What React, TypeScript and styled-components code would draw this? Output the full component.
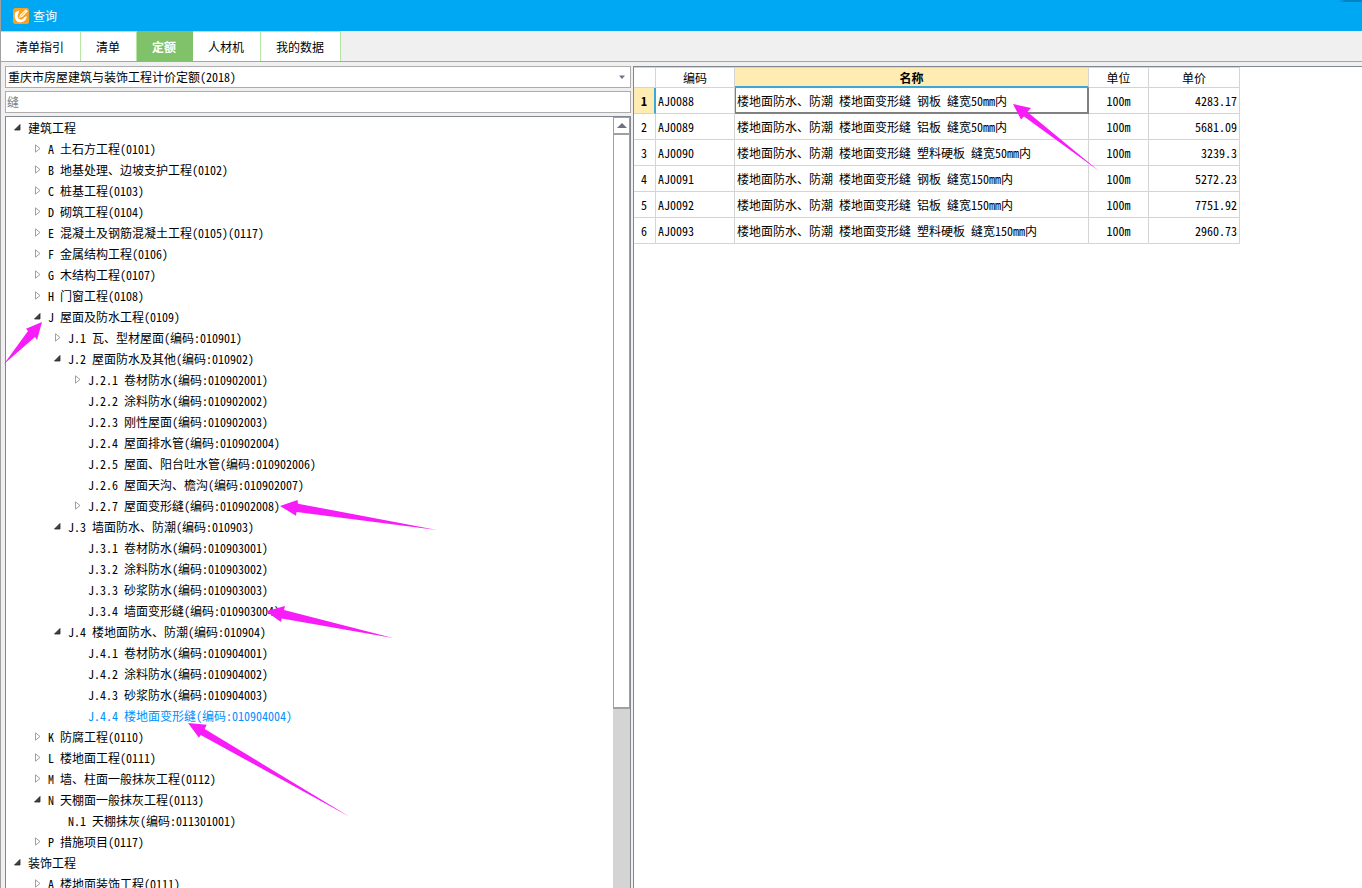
import React, { useState } from 'react';
import styled, { createGlobalStyle, css } from 'styled-components';

const GlobalStyle = createGlobalStyle`
  * { box-sizing: border-box; }
  body { margin: 0; }
  body, button, input, select, table {
    font-family: "Noto Sans CJK SC", sans-serif;
    font-feature-settings: "hwid";
    font-size: 12px;
    line-height: 16px;
    color: #000;
  }
`;

const Window = styled.div`
  position: relative;
  display: flex;
  flex-direction: column;
  height: 100vh;
  overflow: hidden;
  background: #f0f0f0;
  border-left: 1px solid #a0a0a0;
`;

const TitleBar = styled.header`
  display: flex;
  align-items: center;
  gap: 4px;
  flex: none;
  height: 31px;
  padding-left: 12px;
  background: #00a8f3;
  color: #fff;
`;

const Title = styled.h1`
  margin: 0;
  font-size: 12px;
  font-weight: 400;
`;

const CornerShade = styled.span`
  align-self: flex-start;
  width: 24px;
  height: 2px;
  margin-left: auto;
  background: linear-gradient(to right, #00a8f3, #0284c0 30%);
`;

const Tabs = styled.nav`
  display: flex;
  flex: none;
  height: 31px;
  border-bottom: 1px solid #7fc46c;
`;

const Tab = styled.button<{ $active?: boolean }>`
  height: 30px;
  padding: 1px 16px 0 15px;
  border: 0;
  border-top: 1px solid #b5e6a2;
  border-right: 1px solid #b5e6a2;
  background: #fff;
  ${(p) =>
    p.$active &&
    css`
      border-color: #80c269;
      background: #80c269;
      color: #fff;
      font-weight: 700;
    `}
`;

const Panes = styled.main`
  display: grid;
  grid-template-columns: 632fr 729fr;
  flex: 1;
  min-height: 0;
  padding-top: 4px;
`;

const Side = styled.section`
  display: flex;
  flex-direction: column;
  gap: 3px;
  min-width: 0;
  min-height: 0;
  padding: 0 2px 0 4px;
`;

const Combo = styled.div`
  display: grid;
  flex: none;
  align-items: center;
  height: 22px;
  border: 1px solid #acacac;
  background: #fff;

  & > * { grid-area: 1 / 1; }
  svg { justify-self: end; margin-right: 5px; pointer-events: none; }
`;

const Select = styled.select`
  width: 100%;
  height: 20px;
  padding: 0 2px;
  border: 0;
  appearance: none;
  background: transparent;
`;

const Search = styled.input`
  flex: none;
  width: 100%;
  height: 22px;
  padding: 0 1px 2px;
  border: 1px solid #acacac;
  border-radius: 0;
  background: #fff;
  &::placeholder { color: #808080; opacity: 1; }
`;

const TreeBox = styled.div`
  display: flex;
  flex: 1;
  min-height: 0;
  border: 1px solid #828790;
  border-bottom: 0;
  background: #fff;
`;

const Tree = styled.ul`
  flex: 1;
  min-width: 0;
  margin: 0;
  padding: 0;
  overflow: hidden;
  list-style: none;
`;

const Node = styled.li<{ $level: number; $selected: boolean }>`
  display: flex;
  align-items: center;
  height: 21px;
  padding-left: ${(p) => 6 + p.$level * 20}px;
  white-space: pre;
  color: ${(p) => (p.$selected ? '#0090ff' : '#000')};
`;

const Toggle = styled.button`
  display: flex;
  align-items: center;
  justify-content: center;
  width: 11px;
  height: 11px;
  margin-right: 5px;
  padding: 0;
  border: 0;
  background: none;
`;

const Spacer = styled.span`
  width: 16px;
`;

const ScrollBar = styled.div`
  display: flex;
  flex-direction: column;
  flex: none;
  width: 17px;
  background: #d4d4d4;
`;

const ScrollButton = styled.button`
  flex: none;
  height: 18px;
  padding: 0;
  border: 1px solid #a0a0a0;
  border-bottom-width: 2px;
  background: #fff;
  line-height: 0;
`;

const Thumb = styled.div`
  flex: 574;
  border: 1px solid #a0a0a0;
  border-top: 0;
  border-bottom-width: 2px;
  background: #fff;
`;

const Track = styled.div`
  flex: 179;
`;

const Results = styled.section`
  min-width: 0;
  overflow: hidden;
  border-top: 1px solid #828790;
  border-left: 1px solid #828790;
  background: #fff;
`;

const Grid = styled.table`
  width: 606px;
  border-collapse: separate;
  border-spacing: 0;
  table-layout: fixed;
  border-top: 1px solid #d4d4d4;
`;

const Head = styled.th<{ $active?: boolean }>`
  height: 20px;
  padding: 0;
  border-right: 1px solid #d4d4d4;
  border-bottom: 1px solid #d4d4d4;
  font-weight: 400;
  ${(p) =>
    p.$active &&
    css`
      padding-top: 1px;
      border-bottom: 2px solid #3ba7d6;
      background: #ffecb3;
      font-weight: 700;
    `}
`;

const RowHead = styled.th<{ $active: boolean }>`
  padding: 0 1px 0 0;
  border-right: 1px solid #d4d4d4;
  border-bottom: 1px solid #d4d4d4;
  font-weight: 400;
  ${(p) =>
    p.$active &&
    css`
      padding: 0;
      border-right: 2px solid #3ba7d6;
      background: #ffecb3;
      font-weight: 700;
    `}
`;

const Cell = styled.td<{ $align?: 'left' | 'center' | 'right'; $focus?: boolean }>`
  height: 26px;
  padding: 0 2px;
  border-right: 1px solid #d4d4d4;
  border-bottom: 1px solid #d4d4d4;
  text-align: ${(p) => p.$align ?? 'left'};
  white-space: pre;
  overflow: hidden;
  ${(p) =>
    p.$focus &&
    css`
      padding: 1px 1px 0;
      border: 1px solid #808080;
      border-right-width: 2px;
      border-bottom-width: 2px;
      border-top: 0;
    `}
`;

const Marks = styled.svg`
  position: absolute;
  top: 0;
  left: -1px;
  width: 1362px;
  height: 888px;
  pointer-events: none;
`;

type Item = { level: number; text: string; state?: 'open' | 'closed' };

const items: Item[] = [
  { level: 0, text: '建筑工程', state: 'open' },
  { level: 1, text: 'A 土石方工程(0101)', state: 'closed' },
  { level: 1, text: 'B 地基处理、边坡支护工程(0102)', state: 'closed' },
  { level: 1, text: 'C 桩基工程(0103)', state: 'closed' },
  { level: 1, text: 'D 砌筑工程(0104)', state: 'closed' },
  { level: 1, text: 'E 混凝土及钢筋混凝土工程(0105)(0117)', state: 'closed' },
  { level: 1, text: 'F 金属结构工程(0106)', state: 'closed' },
  { level: 1, text: 'G 木结构工程(0107)', state: 'closed' },
  { level: 1, text: 'H 门窗工程(0108)', state: 'closed' },
  { level: 1, text: 'J 屋面及防水工程(0109)', state: 'open' },
  { level: 2, text: 'J.1 瓦、型材屋面(编码:010901)', state: 'closed' },
  { level: 2, text: 'J.2 屋面防水及其他(编码:010902)', state: 'open' },
  { level: 3, text: 'J.2.1 卷材防水(编码:010902001)', state: 'closed' },
  { level: 3, text: 'J.2.2 涂料防水(编码:010902002)' },
  { level: 3, text: 'J.2.3 刚性屋面(编码:010902003)' },
  { level: 3, text: 'J.2.4 屋面排水管(编码:010902004)' },
  { level: 3, text: 'J.2.5 屋面、阳台吐水管(编码:010902006)' },
  { level: 3, text: 'J.2.6 屋面天沟、檐沟(编码:010902007)' },
  { level: 3, text: 'J.2.7 屋面变形缝(编码:010902008)', state: 'closed' },
  { level: 2, text: 'J.3 墙面防水、防潮(编码:010903)', state: 'open' },
  { level: 3, text: 'J.3.1 卷材防水(编码:010903001)' },
  { level: 3, text: 'J.3.2 涂料防水(编码:010903002)' },
  { level: 3, text: 'J.3.3 砂浆防水(编码:010903003)' },
  { level: 3, text: 'J.3.4 墙面变形缝(编码:010903004)' },
  { level: 2, text: 'J.4 楼地面防水、防潮(编码:010904)', state: 'open' },
  { level: 3, text: 'J.4.1 卷材防水(编码:010904001)' },
  { level: 3, text: 'J.4.2 涂料防水(编码:010904002)' },
  { level: 3, text: 'J.4.3 砂浆防水(编码:010904003)' },
  { level: 3, text: 'J.4.4 楼地面变形缝(编码:010904004)' },
  { level: 1, text: 'K 防腐工程(0110)', state: 'closed' },
  { level: 1, text: 'L 楼地面工程(0111)', state: 'closed' },
  { level: 1, text: 'M 墙、柱面一般抹灰工程(0112)', state: 'closed' },
  { level: 1, text: 'N 天棚面一般抹灰工程(0113)', state: 'open' },
  { level: 2, text: 'N.1 天棚抹灰(编码:011301001)' },
  { level: 1, text: 'P 措施项目(0117)', state: 'closed' },
  { level: 0, text: '装饰工程', state: 'open' },
  { level: 1, text: 'A 楼地面装饰工程(0111)', state: 'closed' },
];

const rows = [
  ['AJ0088', '楼地面防水、防潮 楼地面变形缝 钢板 缝宽50mm内', '100m', '4283.17'],
  ['AJ0089', '楼地面防水、防潮 楼地面变形缝 铝板 缝宽50mm内', '100m', '5681.09'],
  ['AJ0090', '楼地面防水、防潮 楼地面变形缝 塑料硬板 缝宽50mm内', '100m', '3239.3'],
  ['AJ0091', '楼地面防水、防潮 楼地面变形缝 钢板 缝宽150mm内', '100m', '5272.23'],
  ['AJ0092', '楼地面防水、防潮 楼地面变形缝 铝板 缝宽150mm内', '100m', '7751.92'],
  ['AJ0093', '楼地面防水、防潮 楼地面变形缝 塑料硬板 缝宽150mm内', '100m', '2960.73'],
];

const tabs = ['清单指引', '清单', '定额', '人材机', '我的数据'];

const arrows = [
  '1013,104 1031,108 1027.5,112 1099,171 1024,116.5 1021,119.5',
  '42,322 26,328.7 28,331 4,364 35,337 37,340',
  '280,506 297.5,500 298,503.7 437,530 296.5,512 296,515.7',
  '266,611.3 285,606 284,610 393,638 281.7,618.5 281,622',
  '188,723 206.7,724.7 204.7,729 350,817 200.7,735 199,737.7',
];

const AppIcon = () => (
  <svg width="16" height="16" viewBox="0 0 16 16" aria-hidden="true">
    <rect width="16" height="16" rx="2.5" fill="#f9a21f" />
    <path d="M6.500 2.200 2.300 4.200C1.300 7 1.500 10 3 12.200c1.300 1.900 3.500 2.500 5.500 2.100 3-.6 5-2.700 5.300-6.300L11 9.500c-.8 1.500-2 2.300-3.500 2.100-2-.3-2.900-1.800-2.800-4z" fill="#fff" />
    <path d="M12.800 1.200l2 2-5.300 5.600-3.300 1.300.8-3.200z" fill="#fff" />
    <path d="M7.300 8.700l4.800-5" stroke="#f9a21f" strokeWidth="0.7" />
  </svg>
);

const OpenMark = () => (
  <svg width="7" height="7" viewBox="0 0 7 7" aria-hidden="true">
    <path d="M0.500 6H6V0.500z" fill="#404040" stroke="#262626" strokeWidth="0.8" strokeLinejoin="round" />
  </svg>
);

const ClosedMark = () => (
  <svg width="6" height="9" viewBox="0 0 6 9" aria-hidden="true">
    <path d="M0.500 0.800V8.200L5 4.500z" fill="#fff" stroke="#a0a0a0" />
  </svg>
);

export default function App() {
  const [tab, setTab] = useState('定额');
  const [selected, setSelected] = useState('J.4.4 楼地面变形缝(编码:010904004)');

  return (
    <Window>
      <GlobalStyle />
      <TitleBar>
        <AppIcon />
        <Title>查询</Title>
        <CornerShade />
      </TitleBar>
      <Tabs>
        {tabs.map((name) => (
          <Tab key={name} type="button" $active={name === tab} onClick={() => setTab(name)}>
            {name}
          </Tab>
        ))}
      </Tabs>
      <Panes>
        <Side>
          <Combo>
            <Select aria-label="定额库">
              <option>重庆市房屋建筑与装饰工程计价定额(2018)</option>
            </Select>
            <svg width="6" height="4" viewBox="0 0 6 4" aria-hidden="true">
              <path d="M0 0.500h6L3 4z" fill="#6d7180" />
            </svg>
          </Combo>
          <Search type="text" aria-label="搜索" placeholder="缝" />
          <TreeBox>
            <Tree role="tree">
              {items.map((item) => (
                <Node
                  key={item.text}
                  role="treeitem"
                  aria-level={item.level + 1}
                  aria-selected={item.text === selected}
                  aria-expanded={item.state ? item.state === 'open' : undefined}
                  $level={item.level}
                  $selected={item.text === selected}
                  onClick={() => setSelected(item.text)}
                >
                  {item.state ? (
                    <Toggle type="button" aria-label={item.state === 'open' ? '折叠' : '展开'}>
                      {item.state === 'open' ? <OpenMark /> : <ClosedMark />}
                    </Toggle>
                  ) : (
                    <Spacer />
                  )}
                  {item.text}
                </Node>
              ))}
            </Tree>
            <ScrollBar>
              <ScrollButton type="button" aria-label="向上滚动">
                <svg width="10" height="5" viewBox="0 0 10 5" aria-hidden="true">
                  <path d="M0 5L5 0l5 5z" fill="#6d7180" />
                </svg>
              </ScrollButton>
              <Thumb />
              <Track />
            </ScrollBar>
          </TreeBox>
        </Side>
        <Results>
          <Grid>
            <colgroup>
              <col width="22" />
              <col width="79" />
              <col width="354" />
              <col width="60" />
              <col width="91" />
            </colgroup>
            <thead>
              <tr>
                <Head />
                <Head scope="col">编码</Head>
                <Head scope="col" $active>名称</Head>
                <Head scope="col">单位</Head>
                <Head scope="col">单价</Head>
              </tr>
            </thead>
            <tbody>
              {rows.map(([code, name, unit, price], i) => (
                <tr key={code}>
                  <RowHead scope="row" $active={i === 0}>{i + 1}</RowHead>
                  <Cell>{code}</Cell>
                  <Cell $focus={i === 0}>{name}</Cell>
                  <Cell $align="center">{unit}</Cell>
                  <Cell $align="right">{price}</Cell>
                </tr>
              ))}
            </tbody>
          </Grid>
        </Results>
      </Panes>
      <Marks aria-hidden="true">
        {arrows.map((points) => (
          <polygon key={points} points={points} fill="#f81cf8" />
        ))}
      </Marks>
    </Window>
  );
}
